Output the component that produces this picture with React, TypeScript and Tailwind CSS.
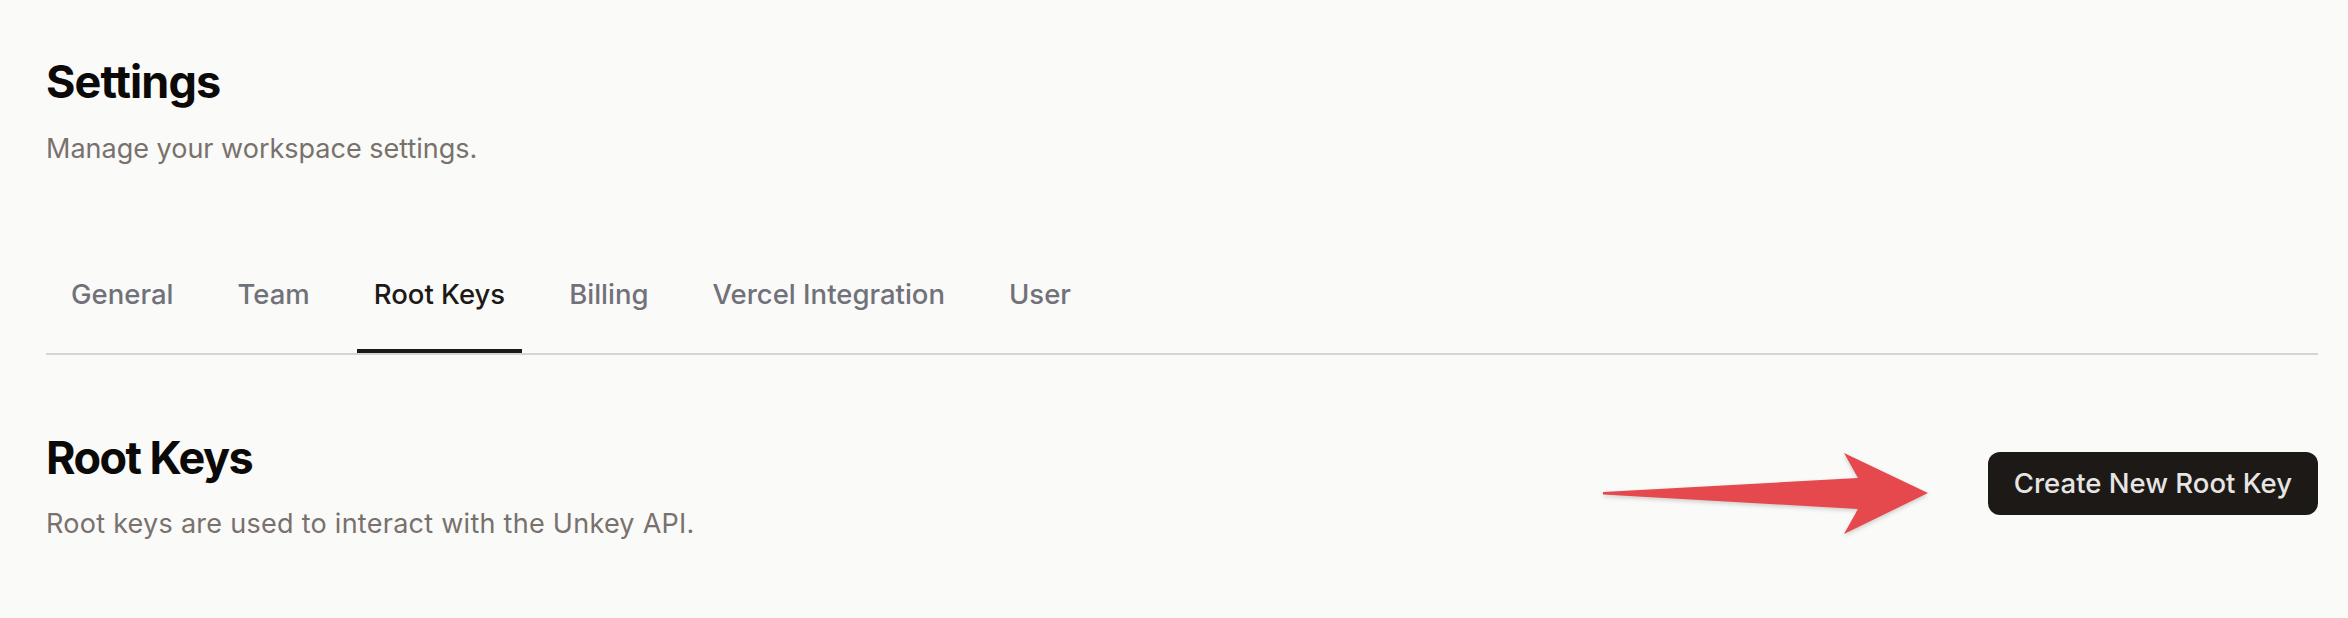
import React from 'react';

const tabs = ['General', 'Team', 'Root Keys', 'Billing', 'Vercel Integration', 'User'];

const Arrow: React.FC = () => (
  <svg
    width="325"
    height="84"
    viewBox="0 0 325 84"
    className="absolute right-[calc(100%+60px)] top-px"
    style={{ filter: 'drop-shadow(0 2px 2px rgba(0,0,0,0.18))' }}
  >
    <path d="M0 39 L255 25 L241 0 L325 40 L241 81 L255 56 L0 41.5 Z" fill="#e5484d" />
  </svg>
);

const App: React.FC = () => {
  const active = 'Root Keys';

  return (
    <div className="min-h-screen bg-[#fafaf9] pl-[46px] pr-[30px] pt-[55px] font-['Inter',sans-serif]">
      {/* Page header */}
      <h1 className="text-[45px] leading-[54px] font-bold tracking-[-0.02em] text-[#0c0a09]">Settings</h1>
      <p className="mt-[22px] text-[27px] leading-[36px] text-[#78716c]">Manage your workspace settings.</p>

      {/* Tabs */}
      <nav className="mt-[107px] flex gap-[30px] border-b-2 border-[#d6d3d1] pl-[8px]">
        {tabs.map((tab) => (
          <div
            key={tab}
            className={`px-[17px] pb-[35px] text-[27.5px] leading-[40px] font-medium border-b-4 ${
              tab === active ? 'border-[#1c1917] text-[#1c1917]' : 'border-transparent text-[#71717a]'
            }`}
          >
            {tab}
          </div>
        ))}
      </nav>

      {/* Root keys section */}
      <section className="mt-[76px] flex items-start justify-between">
        <div>
          <h2 className="text-[45px] leading-[54px] font-bold tracking-[-0.035em] text-[#0c0a09]">Root Keys</h2>
          <p className="mt-[21px] text-[27px] leading-[36px] tracking-[0.01em] text-[#78716c]">
            Root keys are used to interact with the Unkey API.
          </p>
        </div>
        <div className="relative mt-[21px]">
          <Arrow />
          <button className="h-[63px] rounded-[12px] bg-[#1c1917] px-[26px] text-[27.5px] font-medium text-[#e7e5e4]">
            Create New Root Key
          </button>
        </div>
      </section>
    </div>
  );
};

export default App;
